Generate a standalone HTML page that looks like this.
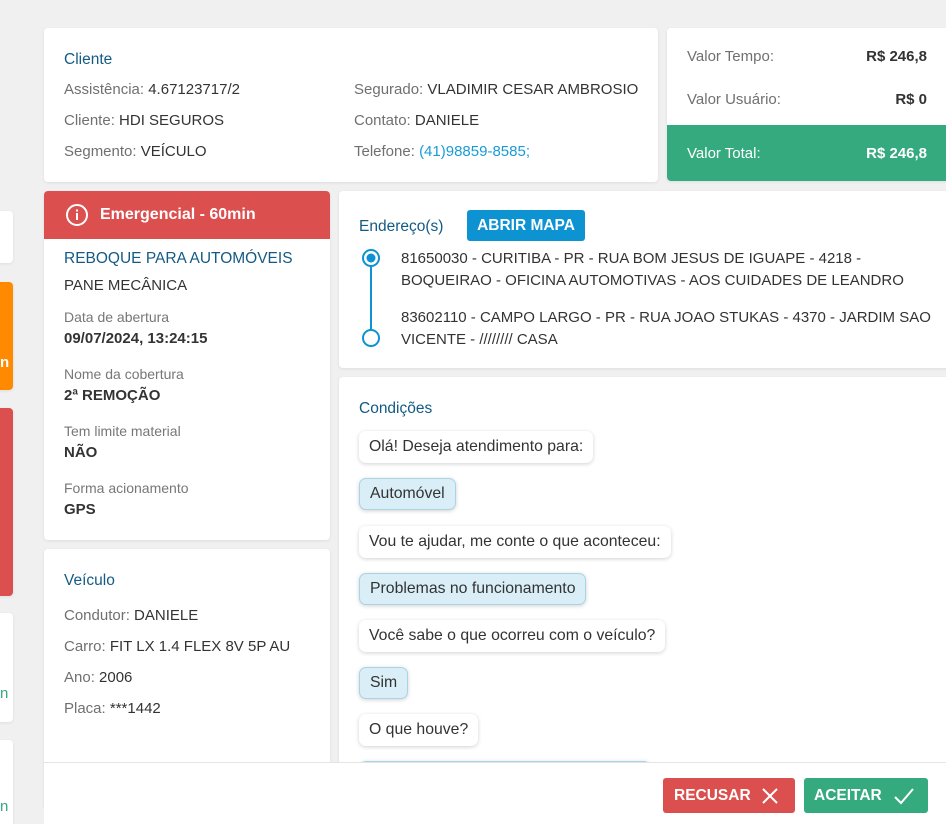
<!DOCTYPE html>
<html><head><meta charset="utf-8"><style>
*{box-sizing:border-box;margin:0;padding:0}
html,body{width:946px;height:824px;overflow:hidden}
body{background:#f0f0f0;font-family:"Liberation Sans",sans-serif;font-size:15px;color:#333;position:relative}
.c{position:absolute;background:#fff;border-radius:4px;box-shadow:0 1px 3px rgba(0,0,0,.08)}
.t{color:#135a85;font-size:15.5px;position:absolute}
.g{color:#707070}
.a{position:absolute;white-space:nowrap}
.b{position:absolute;left:20px;height:32px;line-height:32px;padding:0 10px;border-radius:7px;background:#fff;box-shadow:0 1px 4px rgba(0,0,0,.18);white-space:nowrap;color:#333;font-size:15.8px}
.bl{background:#d9eef6;border:1px solid #a9d4e6;line-height:30px}
.lb{color:#777;font-size:14px;position:absolute;left:20px}
.v{font-weight:bold;position:absolute;left:20px;color:#333}
</style></head><body>
<div class="c" style="left:-4px;top:211px;width:17px;height:52px"></div>
<div class="c" style="left:-4px;top:282px;width:17px;height:108px;background:#ff8a00"><span style="position:absolute;left:4px;top:72px;color:#fff;font-weight:bold">n</span></div>
<div class="c" style="left:-4px;top:408px;width:17px;height:188px;background:#db4f4f"></div>
<div class="c" style="left:-4px;top:613px;width:17px;height:109px"><span style="position:absolute;left:4px;top:72px;color:#36aa7f">n</span></div>
<div class="c" style="left:-4px;top:740px;width:17px;height:100px"><span style="position:absolute;left:4px;top:58px;color:#36aa7f">n</span></div>

<div class="c" style="left:44px;top:28px;width:614px;height:154px">
<div class="t" style="left:20px;top:23px">Cliente</div>
<div class="a" style="left:20px;top:53px"><span class="g">Assistência:</span> 4.67123717/2</div>
<div class="a" style="left:20px;top:84px"><span class="g">Cliente:</span> HDI SEGUROS</div>
<div class="a" style="left:20px;top:115px"><span class="g">Segmento:</span> VEÍCULO</div>
<div class="a" style="left:310px;top:53px"><span class="g">Segurado:</span> VLADIMIR CESAR AMBROSIO</div>
<div class="a" style="left:310px;top:84px"><span class="g">Contato:</span> DANIELE</div>
<div class="a" style="left:310px;top:115px"><span class="g">Telefone:</span> <span style="color:#1a9bd7">(41)98859-8585;</span></div>
</div>

<div class="c" style="left:667px;top:28px;width:290px;height:153px;overflow:hidden">
<div class="a g" style="left:20px;top:20px">Valor Tempo:</div><div class="a" style="right:30px;top:20px;font-weight:bold">R$ 246,8</div>
<div class="a g" style="left:20px;top:63px">Valor Usuário:</div><div class="a" style="right:30px;top:63px;font-weight:bold">R$ 0</div>
<div style="position:absolute;left:0;top:97px;width:100%;height:56px;background:#36aa7f;color:#fff">
<div class="a" style="left:20px;top:20px">Valor Total:</div><div class="a" style="right:30px;top:20px;font-weight:bold">R$ 246,8</div></div>
</div>

<div class="c" style="left:44px;top:191px;width:286px;height:349px;overflow:hidden">
<div style="height:48px;background:#db4f4f;color:#fff;font-weight:bold;font-size:16px;position:relative">
<svg style="position:absolute;left:21px;top:12px" width="24" height="24" viewBox="0 0 24 24"><circle cx="12" cy="12" r="10" fill="none" stroke="#fff" stroke-width="2"/><rect x="11" y="10" width="2" height="7" fill="#fff"/><rect x="11" y="6.5" width="2" height="2" fill="#fff"/></svg>
<span style="position:absolute;left:56px;top:15px">Emergencial - 60min</span></div>
<div class="t" style="left:20px;top:59px;font-size:15.5px">REBOQUE PARA AUTOMÓVEIS</div>
<div class="a" style="left:20px;top:86px">PANE MECÂNICA</div>
<div class="lb" style="top:118px">Data de abertura</div><div class="v" style="top:139px">09/07/2024, 13:24:15</div>
<div class="lb" style="top:175px">Nome da cobertura</div><div class="v" style="top:196px">2ª REMOÇÃO</div>
<div class="lb" style="top:232px">Tem limite material</div><div class="v" style="top:253px">NÃO</div>
<div class="lb" style="top:289px">Forma acionamento</div><div class="v" style="top:310px">GPS</div>
</div>

<div class="c" style="left:44px;top:549px;width:286px;height:260px">
<div class="t" style="left:20px;top:23px">Veículo</div>
<div class="a" style="left:20px;top:58px"><span class="g">Condutor:</span> DANIELE</div>
<div class="a" style="left:20px;top:89px"><span class="g">Carro:</span> FIT LX 1.4 FLEX 8V 5P AU</div>
<div class="a" style="left:20px;top:120px"><span class="g">Ano:</span> 2006</div>
<div class="a" style="left:20px;top:151px"><span class="g">Placa:</span> ***1442</div>
</div>

<div class="c" style="left:339px;top:191px;width:620px;height:177px">
<div class="t" style="left:20px;top:27px">Endereço(s)</div>
<div class="a" style="left:128px;top:19px;height:31px;width:118px;background:#0d93d2;color:#fff;font-weight:bold;border-radius:3px;text-align:center;line-height:31px;font-size:15.5px">ABRIR MAPA</div>
<svg style="position:absolute;left:21px;top:56px" width="22" height="100"><circle cx="11" cy="11" r="8" fill="none" stroke="#0d93d2" stroke-width="2"/><circle cx="11" cy="11" r="4.5" fill="#0d93d2"/><line x1="11" y1="19" x2="11" y2="83" stroke="#0d93d2" stroke-width="2"/><circle cx="11" cy="91" r="8" fill="#fff" stroke="#0d93d2" stroke-width="2"/></svg>
<div class="a" style="left:62px;top:57px;line-height:22px">81650030 - CURITIBA - PR - RUA BOM JESUS DE IGUAPE - 4218 -<br>BOQUEIRAO - OFICINA AUTOMOTIVAS - AOS CUIDADES DE LEANDRO</div>
<div class="a" style="left:62px;top:116px;line-height:22px">83602110 - CAMPO LARGO - PR - RUA JOAO STUKAS - 4370 - JARDIM SAO<br>VICENTE - //////// CASA</div>
</div>

<div class="c" style="left:339px;top:377px;width:620px;height:447px">
<div class="t" style="left:20px;top:23px">Condições</div>
<div class="b" style="top:54px">Olá! Deseja atendimento para:</div>
<div class="b bl" style="top:101px">Automóvel</div>
<div class="b" style="top:149px">Vou te ajudar, me conte o que aconteceu:</div>
<div class="b bl" style="top:196px">Problemas no funcionamento</div>
<div class="b" style="top:243px">Você sabe o que ocorreu com o veículo?</div>
<div class="b bl" style="top:290px">Sim</div>
<div class="b" style="top:337px">O que houve?</div>
<div class="b bl" style="top:384px;width:292px"></div>
</div>

<div style="position:absolute;left:44px;top:762px;width:902px;height:62px;background:#fff;border-top:1px solid #e4e4e4">
<div class="a" style="left:619px;top:15px;width:132px;height:35px;background:#db4f4f;border-radius:3px;color:#fff;font-weight:bold;line-height:35px;padding-left:11px;font-size:15.5px">RECUSAR
<svg style="position:absolute;left:98px;top:9px" width="18" height="18"><path d="M2 2L16 16M16 2L2 16" stroke="#fff" stroke-width="2"/></svg></div>
<div class="a" style="left:760px;top:15px;width:124px;height:35px;background:#36aa7f;border-radius:3px;color:#fff;font-weight:bold;line-height:35px;padding-left:10px;font-size:15.5px">ACEITAR
<svg style="position:absolute;left:89px;top:8px" width="22" height="20"><path d="M2 11L8 17L20 3" fill="none" stroke="#fff" stroke-width="2"/></svg></div>
</div>
</body></html>
